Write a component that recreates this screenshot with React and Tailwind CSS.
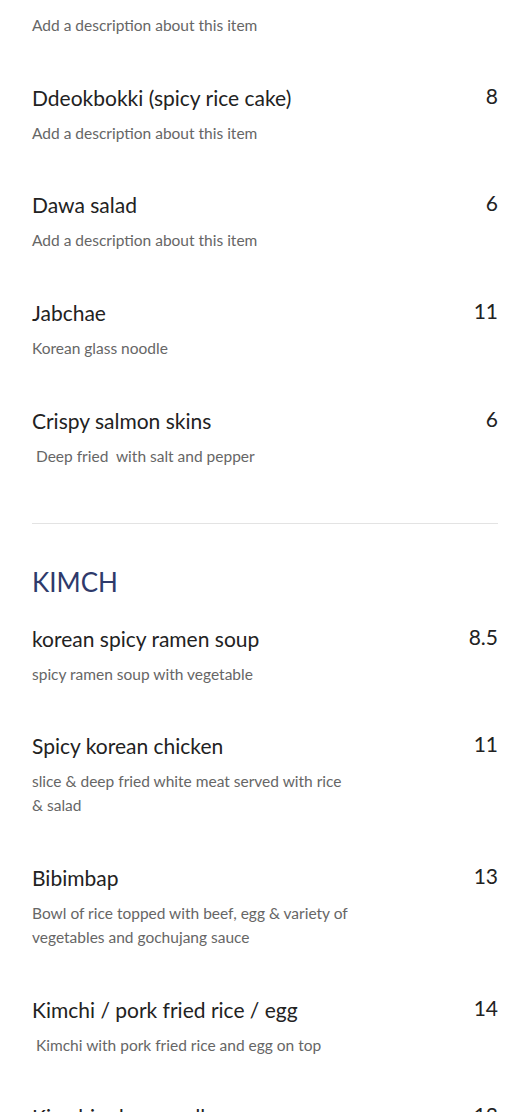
import React from 'react';

const FIRST = [
  { name: 'Kimchi mandu', price: '7', desc: ['Add a description about this item'] },
  { name: 'Ddeokbokki (spicy rice cake)', price: '8', desc: ['Add a description about this item'] },
  { name: 'Dawa salad', price: '6', desc: ['Add a description about this item'] },
  { name: 'Jabchae', price: '11', desc: ['Korean glass noodle'] },
  { name: 'Crispy salmon skins', price: '6', desc: [' Deep fried  with salt and pepper'] },
];

const KIMCH = [
  { name: 'korean spicy ramen soup', price: '8.5', desc: ['spicy ramen soup with vegetable'] },
  { name: 'Spicy korean chicken', price: '11', desc: ['slice & deep fried white meat served with rice', '& salad'] },
  { name: 'Bibimbap', price: '13', desc: ['Bowl of rice topped with beef, egg & variety of', 'vegetables and gochujang sauce'] },
  { name: 'Kimchi / pork fried rice / egg', price: '14', desc: [' Kimchi with pork fried rice and egg on top'] },
  { name: 'Kimchi udon noodle', price: '13', desc: ['Add a description about this item'] },
];

const MenuItem = ({ item, className }) => (
  <div className={className}>
    <div className="flex justify-between items-start">
      <h3 className="text-[21px] leading-[32px] text-[#222222]">{item.name}</h3>
      <span className="text-[21px] leading-[28px] text-[#222222]">{item.price}</span>
    </div>
    <p className="mt-[7px] text-[15.5px] leading-[24px] text-[#666666] whitespace-pre-wrap">
      {item.desc.map((line, i) => (
        <React.Fragment key={i}>
          {i > 0 && <br />}
          {line}
        </React.Fragment>
      ))}
    </p>
  </div>
);

export default function App() {
  return (
    <div className="h-[1112px] overflow-hidden bg-white" style={{ fontFamily: 'Lato, "Open Sans", sans-serif' }}>
      <div className="px-8">
        {FIRST.map((item, i) => (
          <MenuItem key={item.name} item={item} className={i === 0 ? 'mt-[-26px]' : 'mt-[44.67px]'} />
        ))}
        <hr className="mt-[55px] border-0 border-t border-[#e3e3e3]" />
        <h2 className="mt-[39px] text-[26px] leading-[38px] text-[#2e3a6b]">KIMCH</h2>
        {KIMCH.map((item, i) => (
          <MenuItem key={item.name} item={item} className={i === 0 ? 'mt-[22px]' : 'mt-[44.67px]'} />
        ))}
      </div>
    </div>
  );
}
